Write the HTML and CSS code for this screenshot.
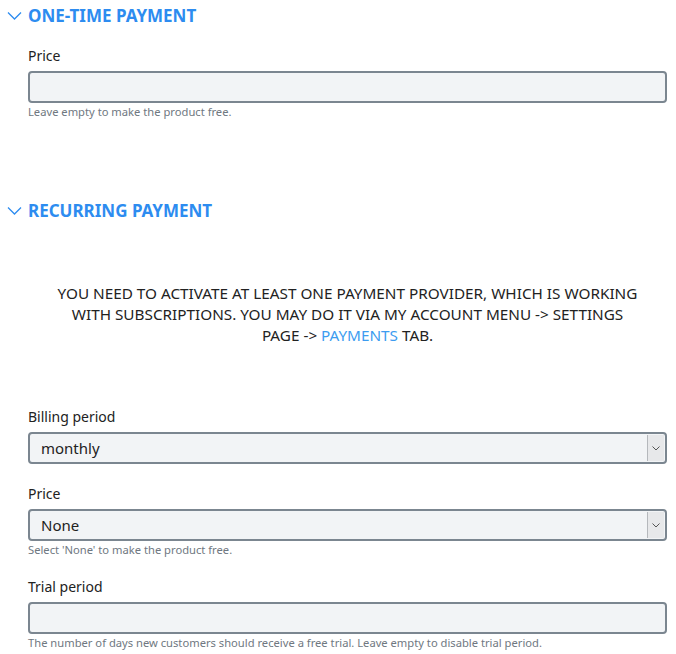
FILE: index.html
```html
<!DOCTYPE html>
<html>
<head>
<meta charset="utf-8">
<link rel="stylesheet" href="styles.css">
</head>
<body>
<div class="page">
  <section class="section">
    <h2 class="section-title">
      <svg class="chev" width="15" height="10" viewBox="0 0 15 10"><path d="M1 1.5 L7.5 8 L14 1.5" fill="none" stroke="#2d8cf0" stroke-width="1.3"/></svg>
      ONE-TIME PAYMENT
    </h2>
    <div class="body">
      <div class="field">
        <label class="label">Price</label>
        <div class="input"></div>
        <div class="help">Leave empty to make the product free.</div>
      </div>
    </div>
  </section>

  <section class="section section-2">
    <h2 class="section-title">
      <svg class="chev" width="15" height="10" viewBox="0 0 15 10"><path d="M1 1.5 L7.5 8 L14 1.5" fill="none" stroke="#2d8cf0" stroke-width="1.3"/></svg>
      RECURRING PAYMENT
    </h2>
    <div class="body">
      <p class="notice">YOU NEED TO ACTIVATE AT LEAST ONE PAYMENT PROVIDER, WHICH IS WORKING WITH SUBSCRIPTIONS. YOU MAY DO IT VIA MY ACCOUNT MENU -&gt; SETTINGS PAGE&nbsp;-&gt;&nbsp;<a class="link">PAYMENTS</a> TAB.</p>

      <div class="field">
        <label class="label">Billing period</label>
        <div class="input select"><span class="value">monthly</span><span class="arrow"><svg width="8" height="5" viewBox="0 0 8 5"><path d="M0.5 0.5 L4 4 L7.5 0.5" fill="none" stroke="#555" stroke-width="1"/></svg></span></div>
      </div>

      <div class="field">
        <label class="label">Price</label>
        <div class="input select"><span class="value">None</span><span class="arrow"><svg width="8" height="5" viewBox="0 0 8 5"><path d="M0.5 0.5 L4 4 L7.5 0.5" fill="none" stroke="#555" stroke-width="1"/></svg></span></div>
        <div class="help">Select 'None' to make the product free.</div>
      </div>

      <div class="field">
        <label class="label">Trial period</label>
        <div class="input"></div>
        <div class="help">The number of days new customers should receive a free trial. Leave empty to disable trial period.</div>
      </div>
    </div>
  </section>
</div>
</body>
</html>
```

FILE: styles.css
```css
html, body {
  margin: 0;
  padding: 0;
  background: #ffffff;
}
body {
  font-family: "Noto Sans", "Open Sans", sans-serif;
  color: #222;
}
.page {
  padding: 0 9px 0 7px;
}
.section-title {
  margin: 0;
  height: 30px;
  display: flex;
  align-items: center;
  gap: 6px;
  font-size: 17px;
  font-weight: 700;
  color: #2d8cf0;
}
.chev {
  display: block;
  margin-top: 1px;
}
.body {
  padding-left: 21px;
}
.section .body {
  padding-top: 16px;
}
.section-2 {
  margin-top: 76px;
}
.section-2 .body {
  padding-top: 58px;
}
.notice {
  margin: 0 0 61px;
  text-align: center;
  font-size: 15.3px;
  line-height: 21px;
  padding: 0 28px;
}
.link {
  display: inline-block;
  color: #3c9cf0;
}
.field {
  margin-bottom: 20px;
}
.label {
  display: block;
  font-size: 14px;
  line-height: 20px;
  margin-bottom: 5px;
}
.input {
  box-sizing: border-box;
  height: 32px;
  border: 2px solid #7b8690;
  border-radius: 4px;
  background: #f2f4f6;
}
.select {
  display: flex;
  align-items: stretch;
  justify-content: space-between;
}
.value {
  font-size: 15px;
  line-height: 28px;
  padding-left: 11px;
}
.arrow {
  width: 16px;
  margin: 1px;
  background: #e7e8ea;
  border-left: 1px solid #b5b8bc;
  display: flex;
  align-items: center;
  justify-content: center;
}
.help {
  margin-top: 2px;
  font-size: 11.2px;
  line-height: 14px;
  color: #6f7881;
}
```
